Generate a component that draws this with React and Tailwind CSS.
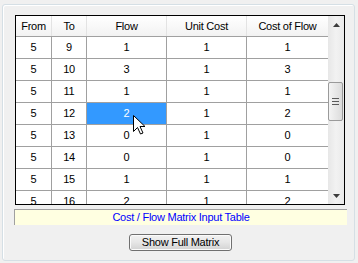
import React from "react";

const rows = [
  ["5", "9", "1", "1", "1"],
  ["5", "10", "3", "1", "3"],
  ["5", "11", "1", "1", "1"],
  ["5", "12", "2", "1", "2"],
  ["5", "13", "0", "1", "0"],
  ["5", "14", "0", "1", "0"],
  ["5", "15", "1", "1", "1"],
  ["5", "16", "2", "1", "2"],
];

const widths = ["w-[36px]", "w-[35px]", "w-[80px]", "w-[80px]", "w-[81px]"];
const headers = ["From", "To", "Flow", "Unit Cost", "Cost of Flow"];

function Cursor() {
  return (
    <svg
      className="absolute left-[46px] top-[12px]"
      width="13"
      height="20"
      viewBox="0 0 13 20"
    >
      <path
        d="M0.5 0.5 L0.5 16.5 L4.5 12.5 L7.5 19 L10 18 L7 11.5 L12 11.5 Z"
        fill="#ffffff"
        stroke="#000000"
        strokeWidth="1"
        strokeLinejoin="miter"
      />
    </svg>
  );
}

export default function App() {
  return (
    <div
      className="w-[358px] h-[263px] bg-[#f0f0f0] pt-[4px] pl-[2px] overflow-hidden tracking-[-0.25px]"
      style={{ fontFamily: '"Liberation Sans", Arial, sans-serif' }}
    >
      <div className="w-[353px] h-[257px] border border-[#d5dfe5] rounded-[3px] shadow-[inset_1px_1px_0_#ffffff] flex flex-col">
        {/* table */}
        <div className="ml-[12px] mt-[10px] w-[330px] h-[190px] border border-black bg-white flex overflow-hidden">
          <div className="w-[312px] flex flex-col overflow-hidden">
            <div className="flex h-[21px] shrink-0 border-b border-[#a0a0a0] bg-gradient-to-b from-white to-[#f2f2f2]">
              {headers.map((h, i) => (
                <div
                  key={h}
                  className={`${widths[i]} shrink-0 flex items-center justify-center text-[11px] text-black ${
                    i < 4 ? "border-r border-[#e3e3e3]" : ""
                  }`}
                >
                  {h}
                </div>
              ))}
            </div>
            {rows.map((r, ri) => (
              <div key={ri} className="flex h-[22px] shrink-0 border-b border-[#a0a0a0]">
                {r.map((c, ci) => {
                  const sel = ri === 3 && ci === 2;
                  return (
                    <div
                      key={ci}
                      className={`${widths[ci]} shrink-0 relative flex items-center justify-center text-[11px] ${
                        ci < 4 ? "border-r border-[#a0a0a0]" : ""
                      } ${sel ? "bg-[#3399ff] text-white" : "text-black"}`}
                    >
                      {c}
                      {sel && <Cursor />}
                    </div>
                  );
                })}
              </div>
            ))}
          </div>
          {/* scrollbar */}
          <div className="w-[16px] h-full bg-gradient-to-r from-[#e7e7e7] via-[#f2f2f2] to-[#eaeaea] flex flex-col items-center">
            <div className="h-[17px] w-full flex items-center justify-center">
              <svg width="7" height="4" viewBox="0 0 7 4">
                <path d="M3.5 0 L7 4 L0 4 Z" fill="#3c3c3c" />
              </svg>
            </div>
            <div className="mt-[49px] ml-[-1px] w-[15px] h-[39px] rounded-[2px] border border-[#9a9a9a] bg-gradient-to-r from-[#f4f4f4] to-[#dcdcdc] flex flex-col items-center justify-center gap-[2px]">
              <div className="w-[7px] h-[1px] bg-[#5a5a5a]" />
              <div className="w-[7px] h-[1px] bg-[#5a5a5a]" />
              <div className="w-[7px] h-[1px] bg-[#5a5a5a]" />
            </div>
            <div className="mt-auto h-[17px] w-full flex items-center justify-center">
              <svg width="7" height="4" viewBox="0 0 7 4">
                <path d="M0 0 L7 0 L3.5 4 Z" fill="#3c3c3c" />
              </svg>
            </div>
          </div>
        </div>
        {/* label */}
        <div className="ml-[11px] mt-[4px] w-[333px] h-[16px] border-t border-l border-[#a0a0a0] bg-[#ffffe1] flex items-center justify-center text-[11px] text-[#0000ff]">
          Cost / Flow Matrix Input Table
        </div>
        {/* button */}
        <div className="ml-[126px] mt-[9px]">
          <button className="w-[103px] h-[17px] rounded-[3px] border border-[#707070] bg-gradient-to-b from-[#f2f2f2] via-[#e6e6e6] to-[#d2d2d2] text-[11px] text-black flex items-center justify-center shadow-[inset_0_0_0_1px_#fbfbfb]">
            Show Full Matrix
          </button>
        </div>
      </div>
    </div>
  );
}
